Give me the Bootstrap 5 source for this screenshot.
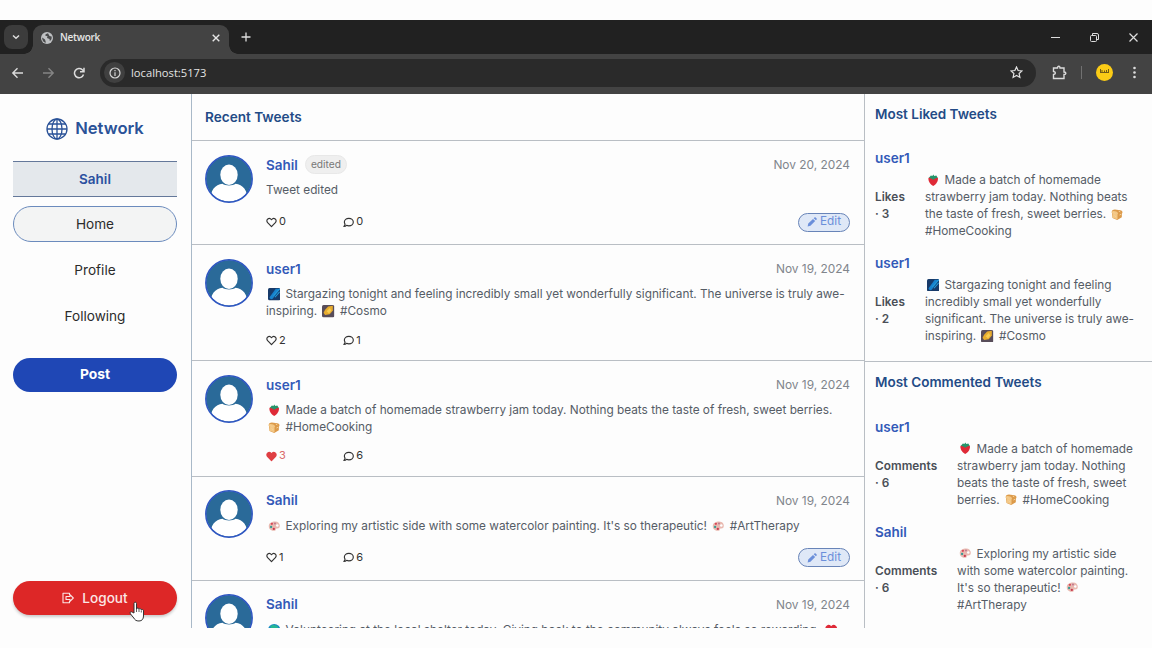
<!DOCTYPE html>
<html lang="en">
<head>
<meta charset="utf-8">
<meta name="viewport" content="width=device-width, initial-scale=1">
<title>Network</title>
<link href="https://cdn.jsdelivr.net/npm/bootstrap@5.3.0/dist/css/bootstrap.min.css" rel="stylesheet">
<style>
body{font-family:Inter,"Liberation Sans",sans-serif;background:#fdfdfd;color:#4b5563;font-size:12px;line-height:17px;overflow:hidden;height:648px;padding:20px 0}
svg{display:block;flex:none}
.browser{height:608px}
.chrome-font{font-family:"Open Sans","Noto Sans",sans-serif}
.tabstrip{height:34px;background:#212121;color:#ddd}
.tab-menu{width:24px;height:24px;border-radius:8px;background:#3c3c3c;margin:5px 5px 5px 4px}
.site-tab{width:196px;height:29px;margin-top:5px;background:#434343;border-radius:9px 9px 0 0;font-size:10px;letter-spacing:-.25px;font-weight:600;padding:0 4px 4px 8px;position:relative;color:#e6e6e6}
.site-tab::before,.site-tab::after{content:"";position:absolute;bottom:0;width:9px;height:9px}
.site-tab::before{left:-9px;background:radial-gradient(circle at 0 0,transparent 8.5px,#434343 9px)}
.site-tab::after{right:-9px;background:radial-gradient(circle at 100% 0,transparent 8.5px,#434343 9px)}
.toolbar{height:39.5px;background:#434343;color:#dcdcdc;padding:0 12px 2px 11px}
.address{height:28px;border-radius:14px;background:#2a2a2a;margin-left:15px;padding:0 13px 0 4px;font-size:11.2px;color:#e3e3e3}
.info{width:21px;height:21px;border-radius:50%;background:#404040}
.page{height:534.5px;background:#fdfdfd}
.side{width:192px;border-right:1px solid #a9b9c8;padding:21px 14px 13px 13px}
.brand{color:#2a5298;font-size:16.6px;font-weight:600;height:28px}
.me{margin-top:18px;height:36px;background:#e4e8ec;border:solid #64789a;border-width:1px 0;color:#2a50a0;font-weight:600;font-size:13.5px;padding-top:1px}
.side-item{height:36px;margin-top:9.8px;border-radius:18px;border:1px solid transparent;color:#2b2b2b;font-size:13.6px;padding-top:1px}
.side-item.current{background:#f3f4f4;border-color:#6b8bbd}
.post{height:34px;margin-top:23.7px;border-radius:17px;background:#1f47b5;color:#fff;font-weight:700;font-size:13.8px}
.logout{height:34px;border-radius:17px;background:#dd2727;color:#fbe6e6;font-weight:500;font-size:13.6px;box-shadow:0 2px 3px #0003}
.pointer{position:absolute;left:129px;top:601px}
.feed{width:672px;overflow:hidden}
.feed-title{height:47.9px;color:#234b86;font-size:13.6px;font-weight:600;padding-left:13px;border-bottom:1px solid #b9bec4}
.tweet{padding:13.5px 14px 12.8px 13px;border-bottom:1px solid #b9bec4;gap:13px}
.name{color:#3259b8;font-weight:600;font-size:13.5px;height:20px;line-height:20px}
.edited{background:#efefef;color:#777;border:1px solid #e8e8e8;border-radius:10px;font-size:10.2px;height:19px;line-height:17px;padding:0 5px;margin-left:7px}
.date{color:#81858c;font-size:11.9px;padding-top:1px}
.msg{font-size:11.8px;color:#555c66}
.tweet .msg{margin-top:7.4px}
.actions{margin-top:13.4px;font-size:11px;line-height:13.6px;color:#333}
.actions>span{width:77.3px;gap:2px}
.edit-btn{height:19px;width:52px;border:1px solid #6884b8;border-radius:10px;background:#dfe8f7;color:#6b8fda;font-size:11.8px;gap:3px}
.emo{display:inline-block;width:12.4px;height:12.4px;margin:0 1.9px;vertical-align:-2.2px}
.trend{width:288px;border-left:1px solid #b9bec4}
.trend-block{padding:12px 13px 0 10px}
.trend-title{font-size:13.5px;font-weight:600;color:#234b86;height:17px;line-height:17px}
.count{font-weight:600;font-size:11.8px;letter-spacing:.05px;color:#4a4f57}
.trend-item{margin-bottom:13px}
.trend-body{margin-top:4px}
.w-likes{width:50px}.w-comments{width:82px}
</style>
</head>
<body>
<svg width="0" height="0" class="position-absolute">
<symbol id="person" viewBox="0 0 48 48"><defs><clipPath id="disc"><circle cx="24" cy="24" r="22.5"/></clipPath></defs><circle cx="24" cy="24" r="23" fill="#2a6a99"/><g clip-path="url(#disc)" fill="#fff"><ellipse cx="24" cy="19.7" rx="8.7" ry="10.2"/><path d="M5 48c0-13 5-18.500 12.500-19.300 2.500 2.300 10.500 2.300 13 0C38 29.500 43 35 43 48z"/></g><circle cx="24" cy="24" r="23.200" fill="none" stroke="#2e56c2" stroke-width="1.500"/></symbol>
<symbol id="heart" viewBox="0 0 16 16"><path d="M8 14 2.400 8.300C.8 6.500.9 4 2.600 2.800 4.300 1.600 6.500 2 8 4c1.500-2 3.700-2.400 5.400-1.200C15.100 4 15.200 6.500 13.600 8.300z" stroke-width="1.700" stroke-linejoin="round" stroke="currentColor"/></symbol>
<symbol id="talk" viewBox="0 0 16 16"><path d="M8.500 1.900c3.700 0 6.500 2.400 6.500 5.400s-2.800 5.500-6.500 5.500c-1.200 0-2.200-.2-3.200-.7-1 .9-2.300 1.500-4 1.600 1.100-1 1.600-2 1.700-3.300C2.300 9.500 2 8.500 2 7.300c0-3 2.800-5.400 6.500-5.400z" fill="none" stroke="currentColor" stroke-width="1.700" stroke-linejoin="round"/></symbol>
<symbol id="pen" viewBox="0 0 16 16"><path fill="currentColor" d="M1 15l1-4.500L9.600 3l3.500 3.500L5.500 14zM10.700 1.900 12 .7c.6-.5 1.200-.5 1.800 0l1.600 1.700c.5.500.5 1.100 0 1.600l-1.200 1.300z"/></symbol>
<symbol id="berry" viewBox="0 0 16 16"><path d="M2 5c3-2 9-2 12 0 1 4-2 8.500-6 10.500C4 13.500 1 9 2 5z" fill="#df2a37"/><path d="M2.500 5 5 2l2 .5L8 .5l1.500 2L12 2l1.800 3-3.300.8L8 7.500 5.500 5.800z" fill="#25956b"/></symbol>
<symbol id="bread" viewBox="0 0 16 16"><path d="M1 5c0-2 2-3 4-3l7 1c3 .5 3.500 3 2 4.500V12l-6 3.500L2 13z" fill="#dc9a4a"/><path d="M1 5c1-2 7-1 8 1.500.3 1-.6 1.800-.6 1.800V15L2 12.500V7.500C1 7 .7 6 1 5z" fill="#f3c785"/><path d="m4 6 1 1M5 10l1 1M10 4l2 1M11 9l2-1" stroke="#fae1b2"/></symbol>
<symbol id="comet" viewBox="0 0 16 16"><rect width="16" height="16" rx="2" fill="#173a69"/><path d="M2 12 10 1h6L6 14c-2 1-4 0-4-2z" fill="#1782cd"/><path d="M7 10 15 1M9 12l6-7" stroke="#239bd9" stroke-width="1.300"/></symbol>
<symbol id="rocket" viewBox="0 0 16 16"><rect width="16" height="16" rx="2" fill="#584d5a"/><path d="M4 6 8 2l6-1v6l-4 5-6 1-2-3z" fill="#e8ac2e"/><path d="m6 8 4-4 2 3-3 4z" fill="#f8cd50"/></symbol>
<symbol id="palette" viewBox="0 0 16 16"><path d="M1 8c0-4 4-6 8-6 5 0 7 4 6 7-.5 2-3 2-4 2s-1 1-1 2c0 2-9 1.500-9-5z" fill="#e9b9b0"/><circle cx="5" cy="5" r="1.500" fill="#d84758"/><circle cx="9" cy="4.500" r="1.300" fill="#bd7a91"/><circle cx="4" cy="9" r="1.500" fill="#369b93"/><circle cx="7.500" cy="11.500" r="1.500" fill="#c93a4e"/><circle cx="12" cy="7" r="1.600" fill="#fff"/></symbol>
<symbol id="earth" viewBox="0 0 16 16"><circle cx="8" cy="8" r="8" fill="#178ac1"/><path d="M3 3c3-3 8-2 10 1l-1 6-4 3-3-4z" fill="#26b793"/></symbol>
</svg>

<div class="browser d-flex flex-column">
<header class="tabstrip chrome-font d-flex">
<div class="tab-menu d-flex align-items-center justify-content-center"><svg width="8" height="8" viewBox="0 0 8 8" fill="none" stroke="currentColor" stroke-width="1.500"><path d="M1 2.500 4 5.300 7 2.500"/></svg></div>
<div class="site-tab d-flex align-items-center"><svg width="12" height="12" viewBox="0 0 12 12"><circle cx="6" cy="6" r="6" fill="#bfc1c3"/><path d="M1.200 5.500 4 7.500l1 3.200C2.500 10.500 1 8 1.200 5.500zM7 1.300c-2 .5-3.200 1.200-2.500 2.500l2 .5L6 6l2.500 1 .3 2c1.500-1 2.200-2.500 1.800-4.500L8.500 4z" fill="#4a4b4c"/></svg><span style="margin-left:7px">Network</span><svg class="ms-auto me-1" width="10" height="10" viewBox="0 0 10 10" stroke="currentColor" stroke-width="1.400"><path d="M1.700 1.700l6.600 6.600M8.300 1.700 1.700 8.300"/></svg></div>
<svg class="align-self-center" style="margin-left:12px" width="10" height="10" viewBox="0 0 10 10" stroke="currentColor" stroke-width="1.300"><path d="M5 .5v9M.5 5h9"/></svg>
<div class="ms-auto d-flex align-items-center" style="gap:30px;padding-right:14px">
<svg width="9" height="9" viewBox="0 0 9 9" stroke="currentColor"><path d="M0 4.500h9"/></svg>
<svg width="9" height="9" viewBox="0 0 9 9" fill="none" stroke="currentColor"><rect x=".5" y="2.500" width="6" height="6" rx="1"/><path d="M2.500 2V.5H7q1.500 0 1.500 1.500v4.500H7"/></svg>
<svg width="9" height="9" viewBox="0 0 9 9" stroke="currentColor" stroke-width="1.200"><path d="m.5.500 8 8M8.500.5l-8 8"/></svg>
</div>
</header>
<nav class="toolbar chrome-font d-flex align-items-center">
<svg width="13" height="12" viewBox="0 0 13 12" fill="none" stroke="currentColor" stroke-width="1.400"><path d="M12 6H2M6.500 1.300 1.800 6l4.700 4.700"/></svg>
<svg style="margin-left:18px" width="13" height="12" viewBox="0 0 13 12" fill="none" stroke="#858585" stroke-width="1.400"><path d="M1 6h10M6.500 1.300 11.200 6l-4.700 4.700"/></svg>
<svg style="margin-left:18px" width="12" height="12" viewBox="0 0 12 12" fill="none" stroke="currentColor" stroke-width="1.500"><path d="M10.500 7.500A4.600 4.600 0 1 1 9.300 2.800L11 4.500M11 .8v4H7"/></svg>
<div class="address flex-grow-1 d-flex align-items-center">
<span class="info d-flex align-items-center justify-content-center"><svg width="12" height="12" viewBox="0 0 12 12" fill="none" stroke="#d8d8d8" stroke-width="1.200"><circle cx="6" cy="6" r="5"/><path d="M6 5.300V9M6 3v1.200"/></svg></span>
<span style="margin-left:6px">localhost:5173</span>
<svg class="ms-auto" width="13" height="13" viewBox="0 0 13 13" fill="none" stroke="currentColor" stroke-width="1.200"><path d="m6.500 1 1.600 3.500 3.900.4-2.900 2.600.8 3.900-3.400-2-3.400 2 .8-3.900L1 4.900l3.900-.4z"/></svg></div>
<svg style="margin-left:16px" width="15" height="15" viewBox="0 0 15 15" fill="none" stroke="currentColor" stroke-width="1.400"><path d="M1.500 3h4c0-2.300 2.500-2.300 2.500 0h4v4c2.500 0 2.500 2.500 0 2.500v4H1.500v-4c2.500-.5 2.500-2.500 0-3z"/></svg>
<span style="width:1px;height:13px;background:#717171;margin-left:14px"></span>
<svg style="margin-left:14px" width="17" height="17" viewBox="0 0 17 17"><circle cx="8.500" cy="8.500" r="8.500" fill="#fbcc16"/><path d="M4.500 5v3.500M12.500 5v3.500M6 8.500V6M8.500 8.500V6.500M10.500 8.500V6M4 8.500h9" stroke="#715b17" fill="none"/></svg>
<svg style="margin-left:20px;margin-right:4px" width="3" height="13" viewBox="0 0 3 13" fill="currentColor"><circle cx="1.500" cy="2" r="1.300"/><circle cx="1.500" cy="6.500" r="1.300"/><circle cx="1.500" cy="11" r="1.300"/></svg>
</nav>

<main class="page d-flex">
<aside class="side d-flex flex-column flex-shrink-0">
<div class="brand d-flex align-items-center justify-content-center" style="gap:7px"><svg width="22" height="22" viewBox="0 0 22 22" fill="none" stroke="currentColor" stroke-width="1.300"><circle cx="11" cy="11" r="10"/><ellipse cx="11" cy="11" rx="5" ry="10"/><path d="M11 1v20M1 11h20M2.300 6h17.400M2.300 16h17.400"/></svg>Network</div>
<div class="me d-flex align-items-center justify-content-center">Sahil</div>
<a class="side-item current d-flex align-items-center justify-content-center text-decoration-none">Home</a>
<a class="side-item d-flex align-items-center justify-content-center text-decoration-none">Profile</a>
<a class="side-item d-flex align-items-center justify-content-center text-decoration-none">Following</a>
<button class="post border-0">Post</button>
<button class="logout border-0 mt-auto d-flex align-items-center justify-content-center"><svg class="me-2" width="12" height="12" viewBox="0 0 12 12" fill="none" stroke="currentColor" stroke-width="1.100"><path d="M7.500 3V1.200H1v9.600h6.500V9M4 4.500h4V2.700L11.300 6 8 9.300V7.500H4z" stroke-linejoin="round"/></svg>Logout</button>
</aside>

<section class="feed flex-shrink-0">
<h1 class="feed-title d-flex align-items-center mb-0">Recent Tweets</h1>
<article class="tweet d-flex"><svg width="48" height="48"><use href="#person"/></svg><div class="flex-grow-1">
<div class="d-flex align-items-center name">Sahil<span class="edited fw-normal">edited</span><span class="date fw-normal ms-auto">Nov 20, 2024</span></div>
<div class="msg">Tweet edited</div>
<div class="actions d-flex align-items-center"><span class="d-flex align-items-center"><svg width="11" height="11" fill="none"><use href="#heart"/></svg>0</span><span class="d-flex align-items-center"><svg width="11" height="11"><use href="#talk"/></svg>0</span><button class="edit-btn ms-auto p-0 d-flex align-items-center justify-content-center"><svg width="10" height="10"><use href="#pen"/></svg>Edit</button></div></div></article>

<article class="tweet d-flex"><svg width="48" height="48"><use href="#person"/></svg><div class="flex-grow-1">
<div class="d-flex align-items-center name">user1<span class="date fw-normal ms-auto">Nov 19, 2024</span></div>
<div class="msg"><svg class="emo"><use href="#comet"/></svg> Stargazing tonight and feeling incredibly small yet wonderfully significant. The universe is truly awe-inspiring. <svg class="emo"><use href="#rocket"/></svg> #Cosmo</div>
<div class="actions d-flex align-items-center"><span class="d-flex align-items-center"><svg width="11" height="11" fill="none"><use href="#heart"/></svg>2</span><span class="d-flex align-items-center"><svg width="11" height="11"><use href="#talk"/></svg>1</span></div></div></article>

<article class="tweet d-flex"><svg width="48" height="48"><use href="#person"/></svg><div class="flex-grow-1">
<div class="d-flex align-items-center name">user1<span class="date fw-normal ms-auto">Nov 19, 2024</span></div>
<div class="msg"><svg class="emo"><use href="#berry"/></svg> Made a batch of homemade strawberry jam today. Nothing beats the taste of fresh, sweet berries. <svg class="emo"><use href="#bread"/></svg> #HomeCooking</div>
<div class="actions d-flex align-items-center"><span class="d-flex align-items-center" style="color:#d9696c"><svg width="11" height="11" fill="#df3f43" color="#df3f43"><use href="#heart"/></svg>3</span><span class="d-flex align-items-center"><svg width="11" height="11"><use href="#talk"/></svg>6</span></div></div></article>

<article class="tweet d-flex"><svg width="48" height="48"><use href="#person"/></svg><div class="flex-grow-1">
<div class="d-flex align-items-center name">Sahil<span class="date fw-normal ms-auto">Nov 19, 2024</span></div>
<div class="msg"><svg class="emo"><use href="#palette"/></svg> Exploring my artistic side with some watercolor painting. It's so therapeutic! <svg class="emo"><use href="#palette"/></svg> #ArtTherapy</div>
<div class="actions d-flex align-items-center"><span class="d-flex align-items-center"><svg width="11" height="11" fill="none"><use href="#heart"/></svg>1</span><span class="d-flex align-items-center"><svg width="11" height="11"><use href="#talk"/></svg>6</span><button class="edit-btn ms-auto p-0 d-flex align-items-center justify-content-center"><svg width="10" height="10"><use href="#pen"/></svg>Edit</button></div></div></article>

<article class="tweet d-flex"><svg width="48" height="48"><use href="#person"/></svg><div class="flex-grow-1">
<div class="d-flex align-items-center name">Sahil<span class="date fw-normal ms-auto">Nov 19, 2024</span></div>
<div class="msg"><svg class="emo"><use href="#earth"/></svg> Volunteering at the local shelter today. Giving back to the community always feels so rewarding. <svg class="emo" fill="#df2a37" color="#df2a37"><use href="#heart"/></svg></div></div></article>
</section>

<aside class="trend flex-shrink-0 overflow-hidden">
<div class="trend-block" style="height:268px;border-bottom:1px solid #b9bec4">
<h2 class="trend-title" style="margin-bottom:25.500px">Most Liked Tweets</h2>
<div class="trend-item"><div class="name">user1</div><div class="trend-body d-flex align-items-center"><div class="count w-likes flex-shrink-0">Likes<br>· 3</div><div class="msg"><svg class="emo"><use href="#berry"/></svg> Made a batch of homemade strawberry jam today. Nothing beats the taste of fresh, sweet berries. <svg class="emo"><use href="#bread"/></svg> #HomeCooking</div></div></div>
<div class="trend-item"><div class="name">user1</div><div class="trend-body d-flex align-items-center"><div class="count w-likes flex-shrink-0">Likes<br>· 2</div><div class="msg"><svg class="emo"><use href="#comet"/></svg> Stargazing tonight and feeling incredibly small yet wonderfully significant. The universe is truly awe-inspiring. <svg class="emo"><use href="#rocket"/></svg> #Cosmo</div></div></div>
</div>
<div class="trend-block">
<h2 class="trend-title" style="margin-bottom:26px">Most Commented Tweets</h2>
<div class="trend-item"><div class="name">user1</div><div class="trend-body d-flex align-items-center"><div class="count w-comments flex-shrink-0">Comments<br>· 6</div><div class="msg"><svg class="emo"><use href="#berry"/></svg> Made a batch of homemade strawberry jam today. Nothing beats the taste of fresh, sweet berries. <svg class="emo"><use href="#bread"/></svg> #HomeCooking</div></div></div>
<div class="trend-item"><div class="name">Sahil</div><div class="trend-body d-flex align-items-center"><div class="count w-comments flex-shrink-0">Comments<br>· 6</div><div class="msg"><svg class="emo"><use href="#palette"/></svg> Exploring my artistic side with some watercolor painting. It's so therapeutic! <svg class="emo"><use href="#palette"/></svg> #ArtTherapy</div></div></div>
</div>
</aside>
</main>
</div>
<svg class="pointer" width="16" height="21" viewBox="0 0 16 21"><path d="M5 12V2.500C5 .7 7.500.7 7.500 2.500V8c.3-1.500 2.400-1.200 2.500.3.500-1.200 2.300-.8 2.300.6.700-.9 2.200-.4 2.200 1V15c0 3-1.500 5-4.500 5-3 0-4-1-5.200-3L1.400 12.800c-1-1.700.8-2.700 2-1.500z" fill="#fff" stroke="#333" stroke-width="1"/><path d="M7.500 8v3M10 8.500V11M12.300 9.500V11.500" stroke="#333" stroke-width=".8"/></svg>
<script src="https://cdn.jsdelivr.net/npm/bootstrap@5.3.0/dist/js/bootstrap.bundle.min.js"></script>
</body>
</html>
